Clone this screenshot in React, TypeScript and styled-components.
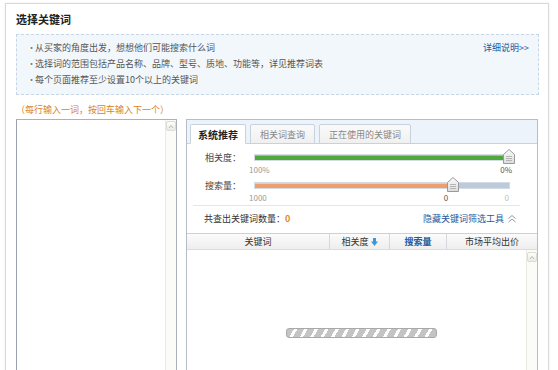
import React from 'react';
import styled, { createGlobalStyle } from 'styled-components';

const GlobalStyle = createGlobalStyle`
  html, body {
    margin: 0;
    padding: 0;
    background: #ffffff;
    overflow: hidden;
  }
  body {
    font-family: 'Noto Sans CJK SC', 'DejaVu Sans', sans-serif;
    color: #444;
  }
`;

const Page = styled.div`
  padding: 3px 0 0 5px;
  width: 558px;
  height: 370px;
  box-sizing: border-box;
`;

const Frame = styled.div`
  width: 544px;
  height: 400px;
  box-sizing: border-box;
  border: 1px solid #d9d9d9;
  box-shadow: 0 0 2px rgba(0, 0, 0, 0.08);
  padding: 0 9px 0 10px;
`;

const Title = styled.h2`
  margin: 0;
  height: 30px;
  line-height: 30px;
  font-size: 11px;
  font-weight: bold;
  color: #222;
`;

const InfoBox = styled.div`
  display: flex;
  justify-content: space-between;
  align-items: flex-start;
  height: 61px;
  box-sizing: border-box;
  border: 1px dashed #c7d6e6;
  background: #f2f7fc;
  padding: 5px 10px 6px 10px;
`;

const TipList = styled.ul`
  margin: 0;
  padding: 0;
  list-style: none;
`;

const Tip = styled.li`
  height: 16px;
  line-height: 16px;
  font-size: 9px;
  color: #555;
  &::before {
    content: '•';
    display: inline-block;
    width: 8px;
    color: #777;
  }
`;

const Link = styled.a<{ weight?: number }>`
  color: #255a9b;
  font-size: 9px;
  text-decoration: none;
  font-weight: ${({ weight }) => weight || 'normal'};
`;

const DetailLink = styled(Link)`
  line-height: 16px;
  margin-top: 0;
  margin-right: -1px;
`;

const Hint = styled.div`
  margin-top: 8px;
  height: 14px;
  line-height: 14px;
  font-size: 9px;
  color: #d98327;
`;

const Main = styled.div`
  display: flex;
  gap: 9px;
  margin-top: 2px;
`;

const InputBox = styled.div`
  width: 161px;
  height: 260px;
  box-sizing: border-box;
  border: 1px solid #a9b2bc;
  border-left-color: #98a3ae;
  display: flex;
  justify-content: flex-end;
`;

const ScrollTrack = styled.div`
  width: 11px;
  border-left: 1px solid #eceae2;
  background: #fbfbf7;
  padding: 1px 0 0 0;
  box-sizing: border-box;
`;

const ScrollBtn = styled.div`
  width: 10px;
  height: 10px;
  box-sizing: border-box;
  border: 1px solid #dcdcd4;
  border-radius: 2px;
  background: linear-gradient(#fdfdfb, #ecebe4);
  display: flex;
  align-items: center;
  justify-content: center;
`;

const Panel = styled.div`
  width: 352px;
  height: 260px;
  box-sizing: border-box;
  border: 1px solid #b5bec8;
  display: flex;
  flex-direction: column;
`;

const TabBar = styled.div`
  display: flex;
  gap: 4px;
  height: 24px;
  box-sizing: border-box;
  padding: 4px 0 0 3px;
  background: #edf3fa;
  border-bottom: 1px solid #c8d2dd;
`;

const Tab = styled.div<{ active?: boolean }>`
  height: 20px;
  line-height: 19px;
  box-sizing: border-box;
  padding: 0 ${({ active }) => (active ? 7 : 9)}px;
  border: 1px solid #c8d2dd;
  border-bottom-color: ${({ active }) => (active ? '#ffffff' : '#c8d2dd')};
  border-radius: 2px 2px 0 0;
  background: ${({ active }) => (active ? '#ffffff' : 'linear-gradient(#fafafa, #f0f0f0)')};
  font-size: ${({ active }) => (active ? 10 : 9)}px;
  font-weight: ${({ active }) => (active ? 'bold' : 'normal')};
  color: ${({ active }) => (active ? '#222' : '#888')};
`;

const Filters = styled.div`
  padding: 6px 0 0 0;
`;

const SliderRow = styled.div<{ mt: number }>`
  display: flex;
  align-items: center;
  height: 14px;
  margin-top: ${({ mt }) => mt}px;
`;

const SliderLabel = styled.div`
  width: 67px;
  padding-left: 18px;
  box-sizing: border-box;
  font-size: 9px;
  color: #444;
`;

const Track = styled.div`
  position: relative;
  width: 256px;
  height: 7px;
  box-sizing: border-box;
  border: 1px solid #d3dbe4;
  background: #bccadb;
`;

const Fill = styled.div<{ color: string; edge: string }>`
  height: 100%;
  background: ${({ color }) => color};
  box-shadow: inset 0 1px 0 ${({ edge }) => edge};
`;

const Thumb = styled.svg`
  position: absolute;
  top: -6px;
  margin-left: -6px;
`;

const Scale = styled.div<{ h: number }>`
  position: relative;
  height: ${({ h }) => h}px;
  line-height: ${({ h }) => h}px;
  margin-left: 62px;
  width: 263px;
  font-size: 8px;
  color: #999;
`;

const ScaleMark = styled.span<{ light?: boolean; dark?: boolean }>`
  position: absolute;
  top: 0;
  color: ${({ light, dark }) => (dark ? '#555' : light ? '#bbb' : '#999')};
`;

const CountRow = styled.div`
  display: flex;
  justify-content: space-between;
  align-items: center;
  height: 25px;
  box-sizing: border-box;
  margin: 1px 17px 3px 6px;
  padding: 0 3px 0 11px;
  border-top: 1px solid #e6e6e6;
  font-size: 9px;
  color: #333;
`;

const Count = styled.b`
  color: #e2862a;
`;

const HideLink = styled(Link)`
  display: flex;
  align-items: center;
  gap: 3px;
`;

const Table = styled.div`
  display: flex;
  flex-direction: column;
  flex: 1;
  margin-top: 0;
`;

const HeadRow = styled.div`
  display: grid;
  grid-template-columns: 143px 60px 57px 1fr;
  height: 17px;
  box-sizing: border-box;
  border-top: 1px solid #c9d1da;
  border-bottom: 1px solid #d6dce3;
  background: linear-gradient(#fbfbfb, #eeeeee);
`;

const HeadCell = styled.div<{ blue?: boolean; last?: boolean }>`
  display: flex;
  align-items: center;
  justify-content: center;
  gap: 2px;
  font-size: 9px;
  color: ${({ blue }) => (blue ? '#255a9b' : '#333')};
  font-weight: ${({ blue }) => (blue ? 'bold' : 'normal')};
  border-right: ${({ last }) => (last ? 'none' : '1px solid #d2d8de')};
`;

const Body = styled.div`
  flex: 1;
  display: flex;
`;

const BodyContent = styled.div`
  flex: 1;
  display: flex;
  justify-content: center;
  padding-top: 78px;
  padding-left: 10px;
`;

const Loader = styled.div`
  width: 151px;
  height: 10px;
  box-sizing: border-box;
  border: 1px solid #a9a9a9;
  border-radius: 3px;
  background: repeating-linear-gradient(
    120deg,
    #c4c4c4 0px,
    #c4c4c4 6px,
    #ffffff 6px,
    #ffffff 9px
  );
`;

const BodyScroll = styled(ScrollTrack)`
  padding-top: 2px;
  margin-right: 0;
`;

const Chevron = () => (
  <svg width="6" height="5" viewBox="0 0 6 5">
    <polyline points="1,4 3,1.5 5,4" fill="none" stroke="#b8b8b0" strokeWidth="1" />
  </svg>
);

const DoubleUp = () => (
  <svg width="10" height="9" viewBox="0 0 10 9">
    <polyline points="1.5,4.5 5,1.5 8.5,4.5" fill="none" stroke="#8c9aab" strokeWidth="1" />
    <polyline points="1.5,8 5,5 8.5,8" fill="none" stroke="#8c9aab" strokeWidth="1" />
  </svg>
);

const SortDown = () => (
  <svg width="7" height="8" viewBox="0 0 7 8">
    <rect x="2" y="0" width="3" height="4" fill="#3b9ad6" />
    <polygon points="0,3.5 7,3.5 3.5,8" fill="#3b9ad6" />
  </svg>
);

const ThumbIcon: React.FC<{ left: string }> = ({ left }) => (
  <Thumb width="12" height="15" viewBox="0 0 12 15" style={{ left }}>
    <defs>
      <linearGradient id="tg" x1="0" y1="0" x2="0" y2="1">
        <stop offset="0" stopColor="#fbfbfb" />
        <stop offset="1" stopColor="#dcdcdc" />
      </linearGradient>
    </defs>
    <polygon points="6,0.5 11.5,5.5 11.5,14.5 0.5,14.5 0.5,5.5" fill="url(#tg)" stroke="#9a9a9a" strokeWidth="1" />
    <line x1="3" y1="7.5" x2="9" y2="7.5" stroke="#b5b5b5" />
    <line x1="3" y1="9.5" x2="9" y2="9.5" stroke="#b5b5b5" />
    <line x1="3" y1="11.5" x2="9" y2="11.5" stroke="#b5b5b5" />
  </Thumb>
);

const tips = [
  '从买家的角度出发，想想他们可能搜索什么词',
  '选择词的范围包括产品名称、品牌、型号、质地、功能等，详见推荐词表',
  '每个页面推荐至少设置10个以上的关键词',
];

const tabs = ['系统推荐', '相关词查询', '正在使用的关键词'];

const relevance = 100;
const volume = 78;

export default function App() {
  return (
    <Page>
      <GlobalStyle />
      <Frame>
        <Title>选择关键词</Title>
        <InfoBox>
          <TipList>
            {tips.map((t) => (
              <Tip key={t}>{t}</Tip>
            ))}
          </TipList>
          <DetailLink href="#">详细说明&gt;&gt;</DetailLink>
        </InfoBox>
        <Hint>（每行输入一词，按回车输入下一个）</Hint>
        <Main>
          <InputBox>
            <ScrollTrack>
              <ScrollBtn>
                <Chevron />
              </ScrollBtn>
            </ScrollTrack>
          </InputBox>
          <Panel>
            <TabBar>
              {tabs.map((t, i) => (
                <Tab key={t} active={i === 0}>
                  {t}
                </Tab>
              ))}
            </TabBar>
            <Filters>
              <SliderRow mt={0}>
                <SliderLabel>相关度：</SliderLabel>
                <Track>
                  <Fill color="#4ea93c" edge="#8fd07f" style={{ width: `${relevance}%` }} />
                  <ThumbIcon left={`${relevance}%`} />
                </Track>
              </SliderRow>
              <Scale h={12}>
                <ScaleMark style={{ left: 0 }}>100%</ScaleMark>
                <ScaleMark dark style={{ right: 0 }}>0%</ScaleMark>
              </Scale>
              <SliderRow mt={2}>
                <SliderLabel>搜索量：</SliderLabel>
                <Track>
                  <Fill color="#ee9f6c" edge="#f7c7a6" style={{ width: `${volume}%` }} />
                  <ThumbIcon left={`${volume}%`} />
                </Track>
              </SliderRow>
              <Scale h={12}>
                <ScaleMark style={{ left: 0 }}>1000</ScaleMark>
                <ScaleMark dark style={{ left: `${(volume * 256) / 100 - 5}px` }}>0</ScaleMark>
                <ScaleMark light style={{ right: 3 }}>0</ScaleMark>
              </Scale>
            </Filters>
            <CountRow>
              <span>
                共查出关键词数量：<Count>0</Count>
              </span>
              <HideLink href="#">
                隐藏关键词筛选工具
                <DoubleUp />
              </HideLink>
            </CountRow>
            <Table>
              <HeadRow>
                <HeadCell>关键词</HeadCell>
                <HeadCell>
                  相关度
                  <SortDown />
                </HeadCell>
                <HeadCell blue>搜索量</HeadCell>
                <HeadCell last>市场平均出价</HeadCell>
              </HeadRow>
              <Body>
                <BodyContent>
                  <Loader />
                </BodyContent>
                <BodyScroll>
                  <ScrollBtn>
                    <Chevron />
                  </ScrollBtn>
                </BodyScroll>
              </Body>
            </Table>
          </Panel>
        </Main>
      </Frame>
    </Page>
  );
}
